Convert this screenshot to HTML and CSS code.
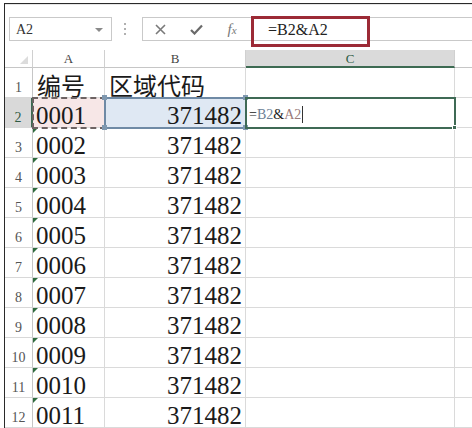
FILE: index.html
```html
<!DOCTYPE html>
<html>
<head>
<meta charset="utf-8">
<link rel="stylesheet" href="styles.css">
</head>
<body>
<div class="frame">
  <div class="fbar">
    <div class="namebox"><span class="nb-text">A2</span><span class="nb-arrow"></span></div>
    <div class="dots"><i></i><i></i><i></i></div>
    <div class="fx-area">
      <div class="fx-btn"><svg width="11" height="11" viewBox="0 0 11 11"><path d="M1 1 L10 10 M10 1 L1 10" stroke="#7a7a7a" stroke-width="1.6" fill="none"/></svg></div>
      <div class="fx-btn"><svg width="13" height="11" viewBox="0 0 13 11"><path d="M1 6 L4.5 9.5 L12 1.5" stroke="#6a6a6a" stroke-width="2.2" fill="none"/></svg></div>
      <div class="fx-btn"><span class="fx">f<span class="fx-x">x</span></span></div>
      <div class="finput"><span class="ftext">=B2&amp;A2</span></div>
      <div class="annot"></div>
    </div>
  </div>
  <div class="grid">
    <div class="hd corner"><span class="tri"></span></div>
    <div class="hd">A</div>
    <div class="hd">B</div>
    <div class="hd hd-sel">C</div>
    <div class="hd hd-last"></div>

    <div class="rh">1</div><div class="c a cjk">编号</div><div class="c cjk">区域代码</div><div class="c"></div><div class="c d"></div>
    <div class="rh rh-sel">2</div><div class="c a copy">0001<span class="hdl hdl-tr"></span><span class="hdl hdl-br"></span></div><div class="c b ref">371482<span class="hdl2 h-tl"></span><span class="hdl2 h-tr"></span><span class="hdl2 h-bl"></span><span class="hdl2 h-br"></span></div><div class="c active"><span class="ed"><span class="eq">=</span><span class="rb">B2</span><span class="eq">&amp;</span><span class="ra">A2</span><span class="caret"></span></span><span class="fill-h"></span></div><div class="c d"></div>
    <div class="rh">3</div><div class="c a w">0002</div><div class="c b">371482</div><div class="c"></div><div class="c d"></div>
    <div class="rh">4</div><div class="c a w">0003</div><div class="c b">371482</div><div class="c"></div><div class="c d"></div>
    <div class="rh">5</div><div class="c a w">0004</div><div class="c b">371482</div><div class="c"></div><div class="c d"></div>
    <div class="rh">6</div><div class="c a w">0005</div><div class="c b">371482</div><div class="c"></div><div class="c d"></div>
    <div class="rh">7</div><div class="c a w">0006</div><div class="c b">371482</div><div class="c"></div><div class="c d"></div>
    <div class="rh">8</div><div class="c a w">0007</div><div class="c b">371482</div><div class="c"></div><div class="c d"></div>
    <div class="rh">9</div><div class="c a w">0008</div><div class="c b">371482</div><div class="c"></div><div class="c d"></div>
    <div class="rh">10</div><div class="c a w">0009</div><div class="c b">371482</div><div class="c"></div><div class="c d"></div>
    <div class="rh">11</div><div class="c a w">0010</div><div class="c b">371482</div><div class="c"></div><div class="c d"></div>
    <div class="rh">12</div><div class="c a w">0011</div><div class="c b">371482</div><div class="c"></div><div class="c d"></div>
  </div>
</div>
</body>
</html>
```
FILE: styles.css
```css
* { box-sizing: border-box; }
html, body { margin: 0; padding: 0; background: #fff; overflow: hidden; }
body { width: 472px; height: 428px; font-family: "Liberation Serif", serif; color: #1a1a1a; }

.frame {
  margin: 3px 0 0 4px;
  border-top: 1px solid #2a2a2a;
  border-left: 1px solid #2a2a2a;
  height: 425px;
}

.fbar {
  display: flex;
  align-items: flex-start;
  height: 46px;
  padding-top: 13px;
  box-shadow: inset 0 4px 0 -3px #e6e6e6;
}
.namebox {
  margin-left: 4px;
  width: 103px;
  height: 24px;
  border: 1px solid #c9c9c9;
  display: flex;
  align-items: center;
  justify-content: space-between;
  padding: 1px 8px 0 6px;
}
.nb-text { font-size: 14px; color: #333; }
.nb-arrow {
  width: 0; height: 0;
  border-left: 4px solid transparent;
  border-right: 4px solid transparent;
  border-top: 4px solid #8a8a8a;
}
.dots {
  margin-left: 12px;
  width: 2px;
  height: 24px;
  display: flex;
  flex-direction: column;
  justify-content: center;
  gap: 3px;
}
.dots i { display: block; width: 2px; height: 2px; background: #b0b0b0; }

.fx-area {
  position: relative;
  margin-left: 16px;
  flex: 1;
  height: 24px;
  border: 1px solid #c9c9c9;
  border-right: none;
  display: flex;
  align-items: center;
}
.fx-btn {
  width: 36px;
  height: 22px;
  display: flex;
  align-items: center;
  justify-content: center;
}
.fx-btn:first-child { width: 35px; }
.fx { font-family: "Liberation Serif", serif; font-style: italic; font-size: 15px; color: #777; }
.fx-x { font-size: 11px; }
.finput { flex: 1; padding-left: 18px; padding-top: 2px; }
.ftext { font-size: 16px; color: #222; }
.annot {
  position: absolute;
  left: 108px;
  top: -2px;
  width: 119px;
  height: 31px;
  border: 3px solid #9c2a36;
}

.grid {
  display: grid;
  grid-template-columns: 28px 72px 141px 209px 1fr;
  grid-template-rows: 18px repeat(12, 30px);
}
.hd {
  border-right: 1px solid #d0d0d0;
  border-bottom: 1px solid #c6c6c6;
  font-size: 13px;
  color: #444;
  display: flex;
  align-items: flex-end;
  justify-content: center;
  line-height: 14px;
  padding-bottom: 1px;
}
.hd.corner { position: relative; }
.tri {
  position: absolute;
  right: 4px;
  bottom: 3px;
  width: 0; height: 0;
  border-left: 8px solid transparent;
  border-bottom: 8px solid #dcdcdc;
}
.hd-sel {
  background: #dadada;
  border-bottom: 2px solid #3d6a52;
  color: #2f5a44;
  padding-bottom: 0;
}
.hd-last { border-right: none; }

.rh {
  border-right: 1px solid #c6c6c6;
  border-bottom: 1px solid #d8d8d8;
  font-size: 14px;
  color: #555;
  display: flex;
  align-items: flex-end;
  justify-content: center;
  line-height: 14px;
  padding-bottom: 2px;
}
.rh-sel {
  background: #d9d9d9;
  border-right: 2px solid #3d6a52;
  color: #2f5a44;
}

.c {
  position: relative;
  border-right: 1px solid #dadada;
  border-bottom: 1px solid #dadada;
  font-size: 25px;
  line-height: 22px;
  display: flex;
  align-items: flex-end;
  padding: 0 3px 0 3px;
  white-space: nowrap;
}
.c.cjk {
  font-family: "Noto Sans CJK SC", sans-serif;
  font-size: 24px;
  padding-bottom: 1px;
  padding-left: 4px;
}
.c.b { justify-content: flex-end; }
.c.d { border-right: none; }
.c.w::before {
  content: "";
  position: absolute;
  left: 0; top: 0;
  width: 0; height: 0;
  border-top: 5px solid #2f6b3e;
  border-right: 5px solid transparent;
}

.copy {
  background: #f7e7e7;
  outline: 2px dashed #6d6363;
  outline-offset: -1px;
  z-index: 2;
}
.hdl {
  position: absolute;
  width: 5px; height: 5px;
  background: #c98c8c;
}
.hdl-tr { right: -3px; top: -3px; }
.hdl-br { right: -3px; bottom: -3px; }

.ref {
  background: #dfe8f3;
  outline: 2px solid #6f8aa5;
  outline-offset: -1px;
  z-index: 2;
}
.hdl2 { position: absolute; width: 5px; height: 5px; background: #7f98b0; }
.h-tl { left: -3px; top: -3px; }
.h-tr { right: -3px; top: -3px; }
.h-bl { left: -3px; bottom: -3px; }
.h-br { right: -3px; bottom: -3px; }

.active {
  outline: 2px solid #3f6a55;
  outline-offset: -1px;
  z-index: 3;
  align-items: center;
  padding-left: 3px;
}
.ed { font-size: 14px; line-height: 16px; display: flex; align-items: center; padding-top: 4px; }
.eq { color: #222; }
.rb { color: #6c7f96; }
.ra { color: #9a7b7b; }
.caret { display: inline-block; width: 1px; height: 17px; background: #333; margin-left: 1px; }
.fill-h {
  position: absolute;
  right: -3px; bottom: -3px;
  width: 5px; height: 5px;
  background: #3f6a55;
  border: 1px solid #fff;
}
```
